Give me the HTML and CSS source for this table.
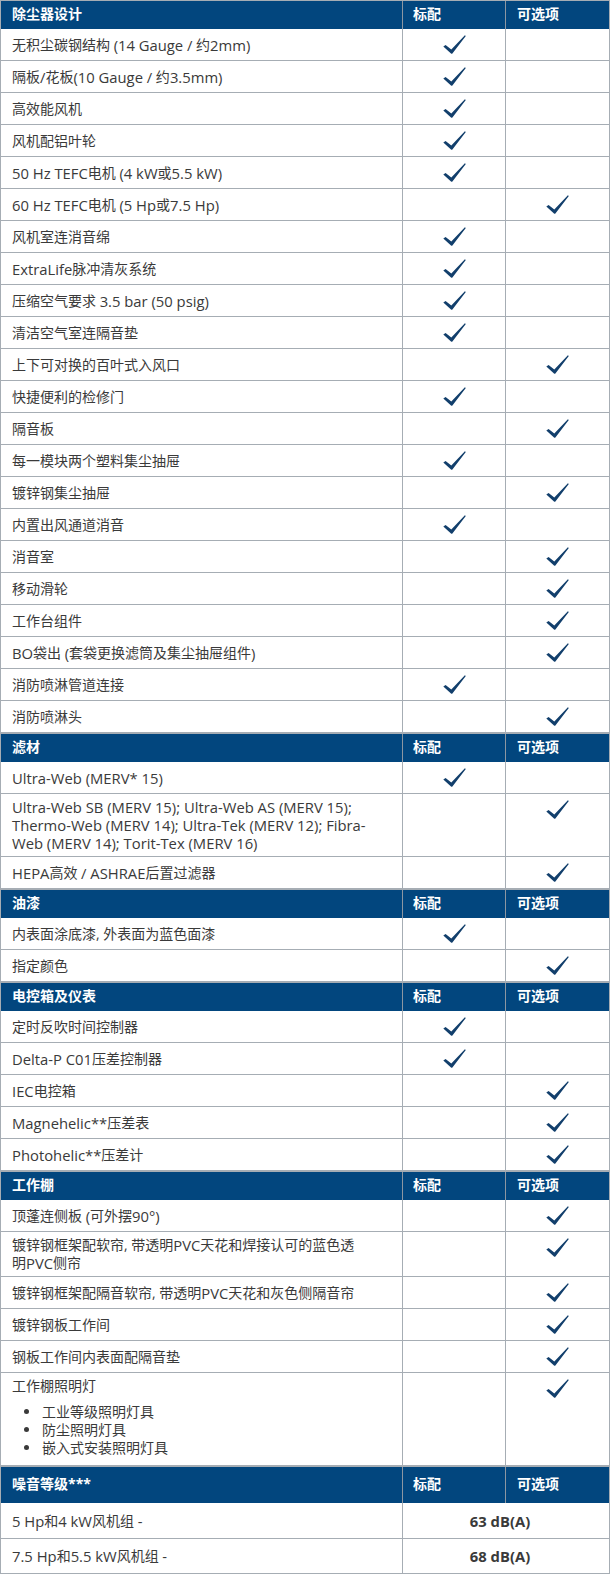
FILE: index.html
```html
<!DOCTYPE html>
<html lang="zh-CN">
<head>
<meta charset="utf-8">
<title>除尘器规格</title>
<link rel="stylesheet" href="styles.css">
</head>
<body>
<svg width="0" height="0" class="defs" aria-hidden="true">
  <defs>
    <symbol id="chk" viewBox="0 0 23 19">
      <path d="M0.3 11.4 L2.6 10.1 L8.3 14.6 L21.9 0.3 L22.8 1 L9.4 18.5 Q8.7 19.1 8 18.6 Z"/>
    </symbol>
  </defs>
</svg>
<div class="spec">
  <div class="row head"><div class="c name">除尘器设计</div><div class="c">标配</div><div class="c">可选项</div></div>
  <div class="row"><div class="c name"><span>无积尘碳钢结构 <span class="en">(14 Gauge /</span> 约<span class="en">2mm)</span></span></div><div class="c ck"><svg><use href="#chk"/></svg></div><div class="c ck"></div></div>
  <div class="row"><div class="c name"><span>隔板<span class="en">/</span>花板<span class="en">(10 Gauge /</span> 约<span class="en">3.5mm)</span></span></div><div class="c ck"><svg><use href="#chk"/></svg></div><div class="c ck"></div></div>
  <div class="row"><div class="c name">高效能风机</div><div class="c ck"><svg><use href="#chk"/></svg></div><div class="c ck"></div></div>
  <div class="row"><div class="c name">风机配铝叶轮</div><div class="c ck"><svg><use href="#chk"/></svg></div><div class="c ck"></div></div>
  <div class="row"><div class="c name"><span><span class="en">50 Hz TEFC</span>电机 <span class="en">(4 kW</span>或<span class="en">5.5 kW)</span></span></div><div class="c ck"><svg><use href="#chk"/></svg></div><div class="c ck"></div></div>
  <div class="row"><div class="c name"><span><span class="en">60 Hz TEFC</span>电机 <span class="en">(5 Hp</span>或<span class="en">7.5 Hp)</span></span></div><div class="c ck"></div><div class="c ck"><svg><use href="#chk"/></svg></div></div>
  <div class="row"><div class="c name">风机室连消音绵</div><div class="c ck"><svg><use href="#chk"/></svg></div><div class="c ck"></div></div>
  <div class="row"><div class="c name"><span><span class="en">ExtraLife</span>脉冲清灰系统</span></div><div class="c ck"><svg><use href="#chk"/></svg></div><div class="c ck"></div></div>
  <div class="row"><div class="c name"><span>压缩空气要求 <span class="en">3.5 bar (50 psig)</span></span></div><div class="c ck"><svg><use href="#chk"/></svg></div><div class="c ck"></div></div>
  <div class="row"><div class="c name">清洁空气室连隔音垫</div><div class="c ck"><svg><use href="#chk"/></svg></div><div class="c ck"></div></div>
  <div class="row"><div class="c name">上下可对换的百叶式入风口</div><div class="c ck"></div><div class="c ck"><svg><use href="#chk"/></svg></div></div>
  <div class="row"><div class="c name">快捷便利的检修门</div><div class="c ck"><svg><use href="#chk"/></svg></div><div class="c ck"></div></div>
  <div class="row"><div class="c name">隔音板</div><div class="c ck"></div><div class="c ck"><svg><use href="#chk"/></svg></div></div>
  <div class="row"><div class="c name">每一模块两个塑料集尘抽屉</div><div class="c ck"><svg><use href="#chk"/></svg></div><div class="c ck"></div></div>
  <div class="row"><div class="c name">镀锌钢集尘抽屉</div><div class="c ck"></div><div class="c ck"><svg><use href="#chk"/></svg></div></div>
  <div class="row"><div class="c name">内置出风通道消音</div><div class="c ck"><svg><use href="#chk"/></svg></div><div class="c ck"></div></div>
  <div class="row"><div class="c name">消音室</div><div class="c ck"></div><div class="c ck"><svg><use href="#chk"/></svg></div></div>
  <div class="row"><div class="c name">移动滑轮</div><div class="c ck"></div><div class="c ck"><svg><use href="#chk"/></svg></div></div>
  <div class="row"><div class="c name">工作台组件</div><div class="c ck"></div><div class="c ck"><svg><use href="#chk"/></svg></div></div>
  <div class="row"><div class="c name"><span><span class="en">BO</span>袋出 <span class="en">(</span>套袋更换滤筒及集尘抽屉组件<span class="en">)</span></span></div><div class="c ck"></div><div class="c ck"><svg><use href="#chk"/></svg></div></div>
  <div class="row"><div class="c name">消防喷淋管道连接</div><div class="c ck"><svg><use href="#chk"/></svg></div><div class="c ck"></div></div>
  <div class="row"><div class="c name">消防喷淋头</div><div class="c ck"></div><div class="c ck"><svg><use href="#chk"/></svg></div></div>

  <div class="row head"><div class="c name">滤材</div><div class="c">标配</div><div class="c">可选项</div></div>
  <div class="row"><div class="c name lat">Ultra-Web (MERV* 15)</div><div class="c ck"><svg><use href="#chk"/></svg></div><div class="c ck"></div></div>
  <div class="row"><div class="c name lat">Ultra-Web SB (MERV 15); Ultra-Web AS (MERV 15); Thermo-Web (MERV 14); Ultra-Tek (MERV 12); Fibra-Web (MERV 14); Torit-Tex (MERV 16)</div><div class="c ck"></div><div class="c ck"><svg><use href="#chk"/></svg></div></div>
  <div class="row"><div class="c name"><span><span class="en">HEPA</span>高效 <span class="en">/ ASHRAE</span>后置过滤器</span></div><div class="c ck"></div><div class="c ck"><svg><use href="#chk"/></svg></div></div>

  <div class="row head"><div class="c name">油漆</div><div class="c">标配</div><div class="c">可选项</div></div>
  <div class="row"><div class="c name">内表面涂底漆, 外表面为蓝色面漆</div><div class="c ck"><svg><use href="#chk"/></svg></div><div class="c ck"></div></div>
  <div class="row"><div class="c name">指定颜色</div><div class="c ck"></div><div class="c ck"><svg><use href="#chk"/></svg></div></div>

  <div class="row head"><div class="c name">电控箱及仪表</div><div class="c">标配</div><div class="c">可选项</div></div>
  <div class="row"><div class="c name">定时反吹时间控制器</div><div class="c ck"><svg><use href="#chk"/></svg></div><div class="c ck"></div></div>
  <div class="row"><div class="c name"><span><span class="en">Delta-P C01</span>压差控制器</span></div><div class="c ck"><svg><use href="#chk"/></svg></div><div class="c ck"></div></div>
  <div class="row"><div class="c name"><span><span class="en">IEC</span>电控箱</span></div><div class="c ck"></div><div class="c ck"><svg><use href="#chk"/></svg></div></div>
  <div class="row"><div class="c name"><span><span class="en">Magnehelic**</span>压差表</span></div><div class="c ck"></div><div class="c ck"><svg><use href="#chk"/></svg></div></div>
  <div class="row"><div class="c name"><span><span class="en">Photohelic**</span>压差计</span></div><div class="c ck"></div><div class="c ck"><svg><use href="#chk"/></svg></div></div>

  <div class="row head"><div class="c name">工作棚</div><div class="c">标配</div><div class="c">可选项</div></div>
  <div class="row"><div class="c name"><span>顶蓬连侧板 <span class="en">(</span>可外摆<span class="en">90°)</span></span></div><div class="c ck"></div><div class="c ck"><svg><use href="#chk"/></svg></div></div>
  <div class="row"><div class="c name"><span>镀锌钢框架配软帘, 带透明<span class="en">PVC</span>天花和焊接认可的蓝色透明<span class="en">PVC</span>侧帘</span></div><div class="c ck"></div><div class="c ck"><svg><use href="#chk"/></svg></div></div>
  <div class="row"><div class="c name"><span>镀锌钢框架配隔音软帘, 带透明<span class="en">PVC</span>天花和灰色侧隔音帘</span></div><div class="c ck"></div><div class="c ck"><svg><use href="#chk"/></svg></div></div>
  <div class="row"><div class="c name">镀锌钢板工作间</div><div class="c ck"></div><div class="c ck"><svg><use href="#chk"/></svg></div></div>
  <div class="row"><div class="c name">钢板工作间内表面配隔音垫</div><div class="c ck"></div><div class="c ck"><svg><use href="#chk"/></svg></div></div>
  <div class="row"><div class="c name top"><p>工作棚照明灯</p><ul class="bul"><li>工业等级照明灯具</li><li>防尘照明灯具</li><li>嵌入式安装照明灯具</li></ul></div><div class="c ck"></div><div class="c ck"><svg><use href="#chk"/></svg></div></div>

  <div class="row head tall"><div class="c name"><span>噪音等级<span class="en">***</span></span></div><div class="c">标配</div><div class="c">可选项</div></div>
  <div class="row noise"><div class="c name"><span><span class="en">5 Hp</span>和<span class="en">4 kW</span>风机组 <span class="en">-</span></span></div><div class="c db lat">63 dB(A)</div></div>
  <div class="row noise last"><div class="c name"><span><span class="en">7.5 Hp</span>和<span class="en">5.5 kW</span>风机组 <span class="en">-</span></span></div><div class="c db lat">68 dB(A)</div></div>
</div>
</body>
</html>
```
FILE: styles.css
```css
* { box-sizing: border-box; }
html, body { margin: 0; padding: 0; background: #fff; }
.defs { position: absolute; }
.spec {
  width: 610px;
  border-left: 1px solid #a6adb4;
  border-right: 1px solid #a6adb4;
  border-top: 1px solid #a6adb4;
  font-family: "Open Sans", "Noto Sans CJK SC", sans-serif;
  font-size: 14px;
  line-height: 18px;
  color: #3a3a3a;
}
.en { display: inline-block; vertical-align: top; font-size: 14.8px; line-height: 18px; height: 18px; }
.lat { font-size: 14.8px; }
.row {
  display: grid;
  grid-template-columns: 402px 103px 1fr;
  min-height: 32px;
  border-bottom: 1px solid #a6adb4;
}
.c {
  border-right: 1px solid #a6adb4;
  padding: 4px 8px 4px 10px;
  display: flex;
  align-items: center;
}
.c:last-child { border-right: none; }
.name { padding-left: 11px; padding-right: 35px; }
.name.top { display: block; padding-top: 4px; padding-bottom: 3px; }
.name.top p { margin: 0; height: 18px; }
.bul { margin: 8px 0 5px; padding-left: 30px; list-style: none; }
.bul li { height: 18px; }
.bul li::before {
  content: "";
  display: inline-block;
  width: 5px;
  height: 5px;
  border-radius: 50%;
  background: #3a3a3a;
  margin: 0 13px 0 -18px;
  vertical-align: 3px;
}
.ck {
  align-items: flex-start;
  justify-content: center;
  padding: 6px 0 0;
}
.ck svg { width: 23px; height: 19px; fill: #123f6c; display: block; }
.head {
  background: #02467e;
  color: #fff;
  font-weight: bold;
  min-height: 29px;
  border-top: 1px solid #a6adb4;
  border-bottom: none;
}
.head .en { font-size: 14px; }
.spec > .head:first-child { border-top: none; min-height: 28px; }
.head .c { border-right-color: #8d97a2; padding-top: 1px; padding-bottom: 3px; }
.head .c:nth-child(2) { padding-left: 10px; }
.head .c:nth-child(3) { padding-left: 11px; }
.head.tall { min-height: 37px; }
.noise { grid-template-columns: 402px 1fr; min-height: 36px; }
.noise.last { min-height: 35px; }
.noise .db { justify-content: center; font-weight: bold; padding-right: 22px; }
```
